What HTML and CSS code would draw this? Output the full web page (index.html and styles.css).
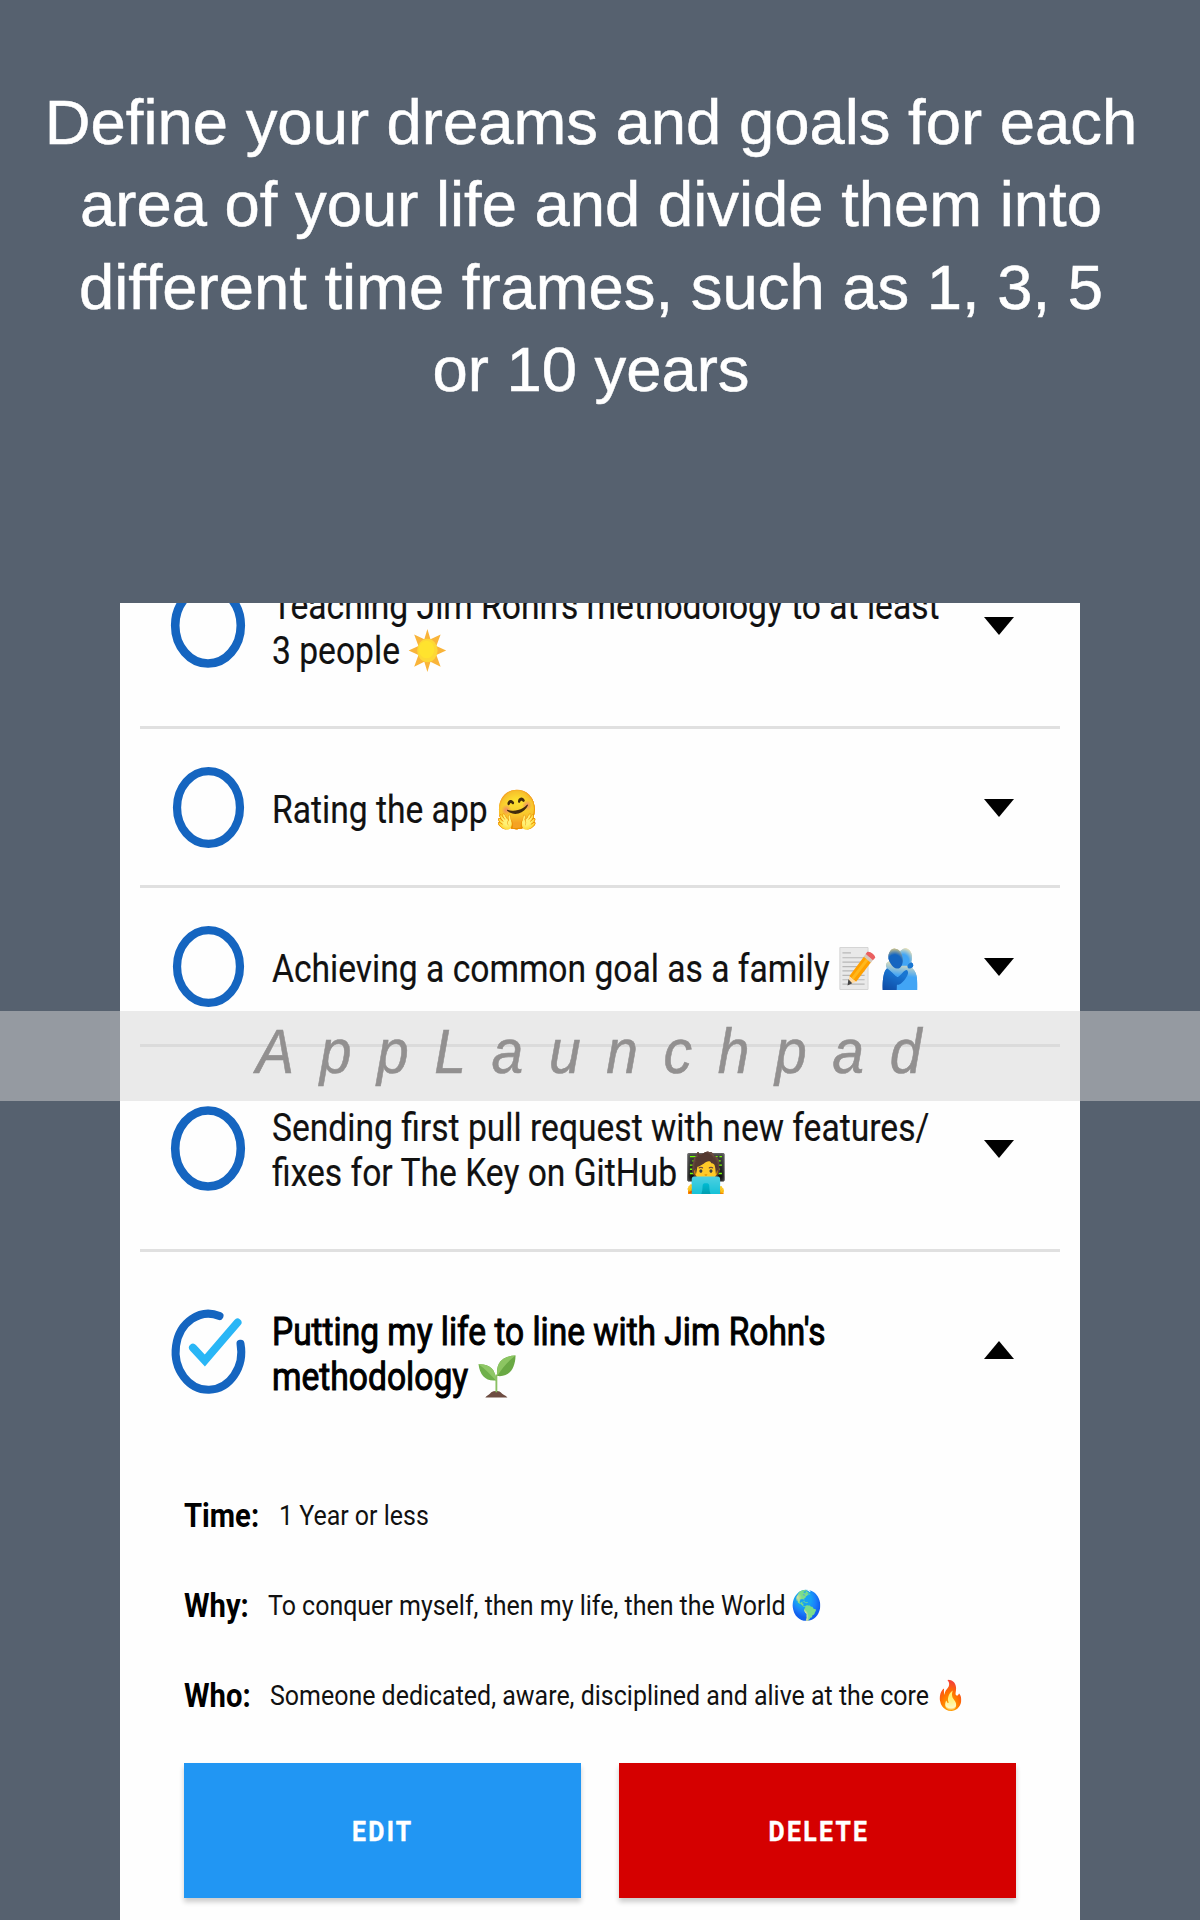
FILE: index.html
```html
<!DOCTYPE html>
<html lang="en">
<head>
<meta charset="utf-8">
<title>The Key</title>
<link rel="stylesheet" href="styles.css">
</head>
<body>
<main class="page">
  <h1 class="headline">Define your dreams and goals for each<br>area of your life and divide them into<br>different time frames, such as 1, 3, 5<br>or 10 years</h1>
  <section class="card">
    <article class="goal goal-tall goal-first">
      <svg class="ring ring-big" viewBox="0 0 74 85"><ellipse cx="37" cy="42.5" rx="32.8" ry="38"/></svg>
      <p class="title"><span class="line">Teaching Jim Rohn's methodology to at least</span><span class="line">3 people <svg class="emoji" viewBox="0 0 44 44"><path fill="#f9b43a" d="M22 0l3.600 10.500 11.900-5-5 11.900L44 22l-11.500 4.600 5 11.900-11.900-5L22 44l-3.600-10.500-11.900 5 5-11.900L0 22l11.500-4.600-5-11.900 11.900 5z"/><circle cx="22" cy="22" r="12" fill="#fdd835"/><circle cx="21" cy="21" r="9" fill="#ffe32e"/></svg></span></p>
      <svg class="arrow" viewBox="0 0 30 18"><path d="M0 0h30L15 18z"/></svg>
    </article>
    <article class="goal">
      <svg class="ring" viewBox="0 0 74 85"><ellipse cx="37" cy="42.5" rx="32.8" ry="38"/></svg>
      <p class="title"><span class="line">Rating the app 🤗</span></p>
      <svg class="arrow" viewBox="0 0 30 18"><path d="M0 0h30L15 18z"/></svg>
    </article>
    <article class="goal">
      <svg class="ring" viewBox="0 0 74 85"><ellipse cx="37" cy="42.5" rx="32.8" ry="38"/></svg>
      <p class="title"><span class="line">Achieving a common goal as a family <svg class="emoji memo" viewBox="0 0 44 44"><path fill="#e9e9e9" stroke="#d2d2d2" d="M1 .5h33v43H1z"/><path stroke="#b8b8b8" stroke-width="1.200" d="M4 6h10M4 11h26M4 15.500h26M4 20h26M4 24.500h26M4 29h26M4 33.500h26M4 38h26"/><path fill="#ffa000" d="M30 9l8 6-18 20.500-8-5.500z"/><path fill="#ffb81c" d="M32.500 11l2.500 2-18 20.500-2.500-2z"/><path fill="#ffd9a0" d="M12 30l8 5.500-9 3.200z"/><path fill="#444" d="M11 33l4.500 4L10 39.500z"/><path fill="#d5c8bc" d="M29 10l2.200-2.800 8.500 6.300L37.300 16z"/><path fill="#ea6060" d="M31.200 7.200L33 5c3-1.200 9.500 3 9.500 6l-2.800 2.500z"/></svg>🫂</span></p>
      <svg class="arrow" viewBox="0 0 30 18"><path d="M0 0h30L15 18z"/></svg>
    </article>
    <article class="goal goal-tall">
      <svg class="ring ring-big" viewBox="0 0 74 85"><ellipse cx="37" cy="42.5" rx="32.8" ry="38"/></svg>
      <p class="title"><span class="line">Sending first pull request with new features/</span><span class="line">fixes for The Key on GitHub 🧑‍💻</span></p>
      <svg class="arrow" viewBox="0 0 30 18"><path d="M0 0h30L15 18z"/></svg>
    </article>
    <article class="goal goal-tall goal-open">
      <svg class="ring ring-big" viewBox="0 0 74 85"><path d="M48.500 6A32.800 38 0 1 0 69.500 33.800"/><path class="tick" d="M22 37.800L33.800 50.500L66.500 12.500"/></svg>
      <p class="title"><span class="line">Putting my life to line with Jim Rohn's</span><span class="line">methodology <svg class="emoji sprout" viewBox="0 0 44 44"><path fill="#6d4c41" d="M8 43.500c2-2.500 5-3 7-5.500 3-1.500 8-1.500 11 0 2 2.500 6 3 8 5.500z"/><path fill="none" stroke="#8bc063" stroke-width="2.200" d="M21 38V20"/><path fill="#6fb04a" d="M20.500 26C8 27 2 21 0 9.500 13 9 20 14 20.500 26z"/><path fill="#8fc766" d="M20.500 26C15 21 8 14 0 9.500 12 9 20 14 20.500 26z"/><path fill="#6aa944" d="M22 21.500C20 8 28 1 43.500.5 43 14 36 23 22 21.500z"/><path fill="#8cc562" d="M22 21.500C20 8 28 1 43.500.5 35 6 28 13 22 21.500z"/></svg></span></p>
      <svg class="arrow" viewBox="0 0 30 18"><path d="M0 18h30L15 0z"/></svg>
    </article>
    <dl class="details">
      <div class="detail"><dt>Time:</dt><dd>1 Year or less</dd></div>
      <div class="detail"><dt>Why:</dt><dd>To conquer myself, then my life, then the World 🌎</dd></div>
      <div class="detail"><dt>Who:</dt><dd>Someone dedicated, aware, disciplined and alive at the core 🔥</dd></div>
    </dl>
    <div class="actions">
      <button class="button edit"><span>EDIT</span></button>
      <button class="button delete"><span>DELETE</span></button>
    </div>
  </section>
  <div class="watermark"><span>AppLaunchpad</span></div>
</main>
</body>
</html>
```
FILE: styles.css
```css
* { box-sizing: border-box; }
body { margin: 0; background: #56616f; }
.page {
  position: relative;
  width: 1200px;
  height: 1920px;
  overflow: hidden;
  padding-top: 81px;
}
.headline {
  margin: 0;
  height: 522px;
  padding-right: 18px;
  color: #fff;
  font: 400 63.4px/82.4px "Liberation Sans", Arial, sans-serif;
  -webkit-text-stroke: .5px #fff;
  text-align: center;
}
.card {
  width: 960px;
  height: 1317px;
  margin: 0 auto;
  padding: 0 20px;
  overflow: hidden;
  background: #fefefe;
  color: #111;
  font-family: Roboto, "Noto Color Emoji", sans-serif;
}
.goal {
  display: grid;
  grid-template-columns: 74px minmax(0, 1fr) 30px;
  column-gap: 27px;
  align-items: center;
  height: 159.2px;
  padding: 0 46px 0 31px;
  border-bottom: 3px solid #e0e0e0;
}
.goal-tall { height: 204.5px; }
.goal-first { margin-top: -78.5px; }
.goal-open { height: 201px; border-bottom: 0; }
.ring { width: 71px; height: 83px; justify-self: center; overflow: visible; }
.ring-big { width: 74px; height: 85px; margin-top: 1px; }
.ring ellipse, .ring path { fill: none; stroke: #1565c0; stroke-width: 8.6; stroke-linecap: round; }
.ring path { stroke-width: 8; }
.ring .tick { stroke: #29b6f6; }
.title { margin: 4px 0 0; font-size: 38.5px; line-height: 45.2px; -webkit-text-stroke: .2px #111; }
.goal-first .title { margin-top: 5px; }
.goal-open .title { margin-top: 3px; color: #000; -webkit-text-stroke: 1px #000; }
.line {
  display: block;
  height: 45.2px;
  white-space: nowrap;
  transform: scaleX(.873);
  transform-origin: left;
}
.emoji { width: 44px; height: 43px; vertical-align: -8px; -webkit-text-stroke: 0; }
.memo { margin: 0 2px 0 1px; }
.sprout { margin-left: 2px; }
.arrow { width: 30px; height: 18px; margin-top: 2px; }
.goal-open .arrow { margin-top: -4px; }
.goal-open .line:first-child { transform: scaleX(.87); }
.details { margin: 43.5px 0 0; padding-left: 44px; }
.detail { display: flex; align-items: baseline; height: 90px; }
.detail:last-child { height: 86.5px; }
dt, dd { margin: 0; white-space: nowrap; transform-origin: left; }
dt { transform: scaleX(.885); font-size: 33px; font-weight: 700; color: #000; }
dd { margin-left: 10.5px; transform: translateY(-2px) scaleX(.879); font-size: 28.4px; }
.actions { display: flex; gap: 38.8px; padding: 0 43.8px; }
.button {
  width: 396.8px;
  height: 135px;
  padding: 3px 0 0 2px;
  border: 0;
  box-shadow: 0 4px 5px rgba(0, 0, 0, .2);
  color: #fff;
  font: 700 28px Roboto, sans-serif;
  -webkit-text-stroke: .4px #fff;
  letter-spacing: 2.6px;
}
.button span { display: inline-block; transform: scaleX(.885); }
.edit { background: #2196f3; }
.delete { background: #d50000; }
.watermark {
  position: absolute;
  left: 0;
  top: 1011px;
  width: 1200px;
  height: 90px;
  padding-left: 255.5px;
  background: rgba(214, 214, 214, .49);
  color: #929090;
  font: italic 63px/80px "Liberation Sans", Arial, sans-serif;
  letter-spacing: 28.3px;
  -webkit-text-stroke: .6px #929090;
}
.watermark span { display: inline-block; transform: scaleX(.905); transform-origin: left; }
```
